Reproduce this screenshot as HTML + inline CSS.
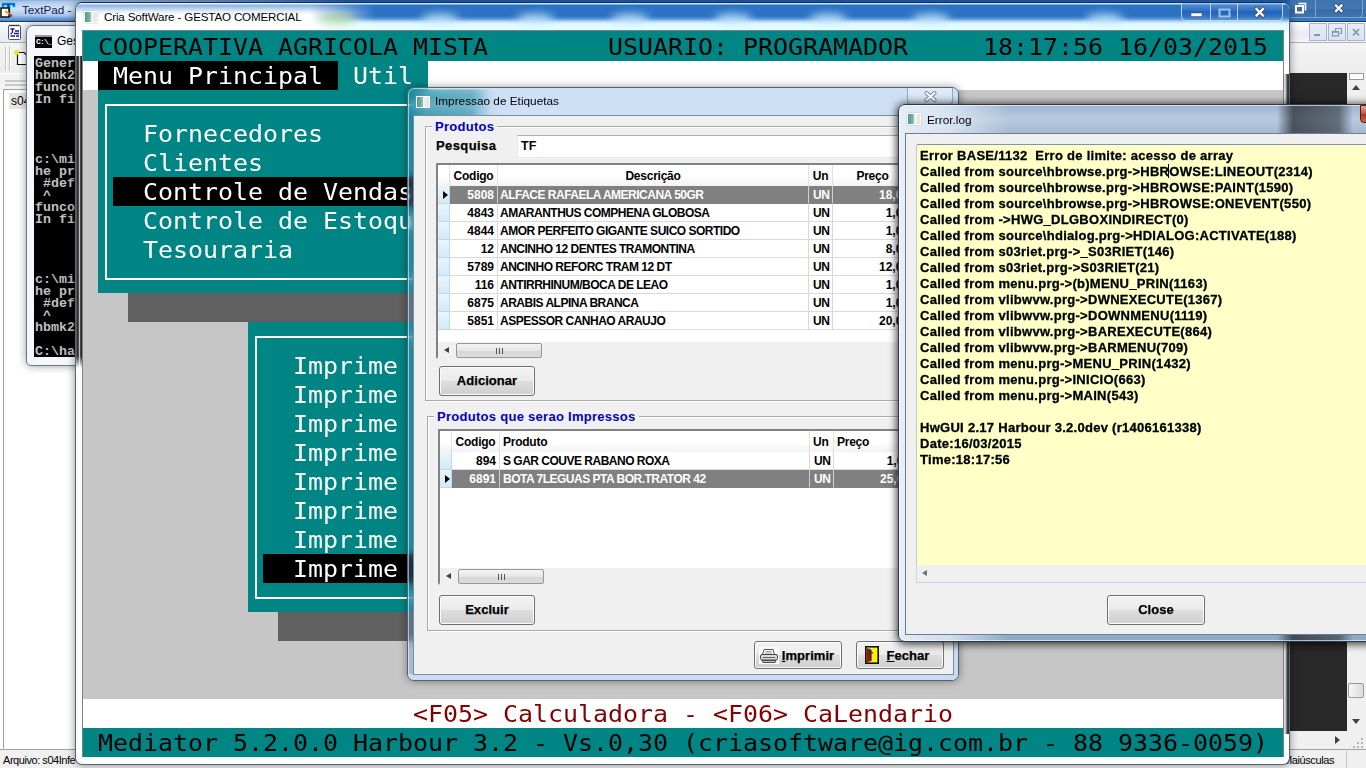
<!DOCTYPE html>
<html lang="pt-BR">
<head>
<meta charset="utf-8">
<title>Cria SoftWare - GESTAO COMERCIAL</title>
<style>
*{box-sizing:border-box;margin:0;padding:0}
html,body{width:1366px;height:768px;overflow:hidden;background:#fff}
body{position:relative;font-family:"Liberation Sans",sans-serif;font-size:12px;color:#000}
.abs{position:absolute}
/* ---------- TextPad (background app) ---------- */
#tp-title{left:0;top:0;width:1366px;height:22px;background:linear-gradient(#1f5fae 0,#2a6cc0 2px,#2b73c6 3px,#2a72c4 17px,#3c7fcb 21px,#23364f 21px);overflow:hidden}
#tp-title .glow{left:-30px;top:-4px;width:420px;height:25px;background:radial-gradient(ellipse at 20% 50%,rgba(225,235,250,.95),rgba(200,218,245,.8) 40%,rgba(160,190,235,0) 75%)}
#tp-title .t{left:22px;top:3px;font-size:11.7px;color:#0b1b5a;white-space:pre}
#tp-menu{left:0;top:22px;width:1366px;height:20px;background:linear-gradient(#f7f9fd,#e4eaf5)}
#tp-menu .m{left:30px;top:3px;white-space:pre}
#tp-tool{left:0;top:42px;width:1366px;height:31px;background:linear-gradient(#f4f4f4,#ededed);border-top:1px solid #b4b4b4}
.mdi{top:23px;width:18px;height:18px;border:1px solid #a9b5c6;background:linear-gradient(#e4eefa,#d6e4f4)}
.grip{top:3px;width:2px;height:25px;background:#c4c4c4;border-right:1px solid #fff}
#tp-left{left:3px;top:89px;width:77px;height:661px;background:#fff;border:1px solid #a0a0a0}
#tp-left .tab{left:5px;top:3px;width:60px;height:16px;background:#e6e6e6;padding:1px 2px;white-space:pre}
.ua{border:4px solid transparent;border-bottom:5px solid #404040;border-top:0}.da{border:4px solid transparent;border-top:5px solid #404040;border-bottom:0}.ra{border:4px solid transparent;border-left:5px solid #404040;border-right:0}
#tp-dark{left:1290px;top:73px;width:57px;height:658px;background:#282828}
#tp-vs{left:1347px;top:73px;width:19px;height:658px;background:#f0f0f0}
#tp-hs{left:1290px;top:731px;width:76px;height:18px;background:#f0f0f0}
#tp-status{left:0;top:749px;width:1366px;height:19px;background:#f0f0f0;border-top:1px solid #a0a0a0}
/* ---------- cmd window ---------- */
#cmd{left:26px;top:25px;width:120px;height:341px;background:#f4f8fd;border:1px solid #6a7686;border-radius:7px 7px 5px 5px;box-shadow:0 0 8px rgba(0,0,0,.4)}
#cmd .cico{left:8px;top:9px;width:17px;height:13px;background:#000;border-top:2px solid #999;overflow:hidden}
#cmd .cico i{position:absolute;left:1px;top:0;font:bold 8px/10px "Liberation Mono",monospace;color:#fff;letter-spacing:-.8px}
#cmd .ct{left:30px;top:8px;font-size:12px;white-space:pre}
#cmd .scr{left:7px;top:30px;width:120px;height:301px;background:#000;color:#c0c0c0;font:bold 13.3px/12px "Liberation Mono",monospace;white-space:pre;overflow:hidden;padding:2px 0 0 1px}
/* ---------- main window ---------- */
#main{left:75px;top:2px;width:1215px;height:763px;border-radius:7px;border:1px solid #5a6472;border-top-color:#10305e;box-shadow:0 0 9px rgba(0,0,0,.45);overflow:hidden;background:#fdfeff}
#main .tb{left:0;top:0;width:1213px;height:29px;background:linear-gradient(#cfe0f8 0,#cfe0f8 1px,#2a73c5 2px,#2a72c2 13px,#5b97d8 16px,#a9cdf0 18px,#d6f0fb 20px,#e2fbfd 22px,#e9ffff 28px)}
#main .tbl{left:0;top:0;width:300px;height:29px;background:linear-gradient(90deg,#fff 0,#fff 78%,rgba(255,255,255,0));-webkit-mask-image:linear-gradient(rgba(0,0,0,.45) 2px,rgba(0,0,0,.9) 9px,#000 12px);mask-image:linear-gradient(rgba(0,0,0,.45) 2px,rgba(0,0,0,.9) 9px,#000 12px)}
#main .cl{width:38px;height:10px;border-radius:50%;background:rgba(200,232,255,.9);filter:blur(4px);top:11px;margin-left:-8px}
#main .fl{left:0;top:53px;width:7px;height:312px;background:linear-gradient(90deg,#6a6a6a,#1a1a1a 30%,#b8c0c8 50%,#161616 70%,#4a4a4a);-webkit-mask-image:linear-gradient(#000 300px,transparent 312px);mask-image:linear-gradient(#000 300px,transparent 312px)}
#main .fr{left:1207px;top:71px;width:7px;height:660px;background:linear-gradient(90deg,#777,#e8e8e8 25%,#9aa0a8 45%,#3a3f46 60%,#2a2a2a)}
#main .ttl{left:28px;top:7px;font-size:11.6px;white-space:pre;letter-spacing:-.15px}
#main .cb{left:1105px;top:0;width:102px;height:18px;border:1px solid #c4d6ee;border-top:0;border-radius:0 0 5px 5px;background:linear-gradient(rgba(120,170,230,.55),rgba(50,110,190,.55) 45%,rgba(30,90,175,.6) 50%,rgba(70,130,205,.5))}
#main .cb i{position:absolute;top:0;width:1px;height:17px;background:#b8cde8}
#con{left:83px;top:32px;width:1200px;height:725px;background:#c6c6c6;font-family:"DejaVu Sans Mono","Liberation Mono",monospace;font-size:22.5px;line-height:30px;white-space:pre;clip-path:inset(-2px -1px -1px -1px);box-shadow:0 -1px 0 1px #7d8288}
#con .r{position:absolute;height:29px;white-space:pre}
#con .r i{display:inline-block;font-style:normal;transform:scaleX(1.1074);transform-origin:0 0}
#con .w{color:#fff}
.teal{background:#008585}
/* ---------- dialogs ---------- */
.dlg{background:#f0f0f0}
#d1{left:407px;top:87px;width:552px;height:594px;border-radius:7px;border:1px solid #55606e;background:linear-gradient(rgba(120,170,230,.22),rgba(85,150,225,.34) 28px,rgba(95,155,225,.3) 29px);-webkit-backdrop-filter:blur(4px);backdrop-filter:blur(4px);box-shadow:0 0 8px rgba(0,0,0,.4), inset 0 0 0 1px rgba(255,255,255,.55)}
#d1 .t1{left:0;top:0;width:550px;height:28px;border-radius:6px 6px 0 0;background:linear-gradient(90deg,rgba(205,224,246,0) 3px,rgba(205,224,246,.25) 18px,rgba(205,224,246,.38) 64px,rgba(205,224,246,.85) 82px,#cde0f6 94px)}
#d1 .t2{left:6px;top:28px;width:544px;height:564px;border-radius:0 0 6px 0;background:#c9dcf5}
#d1 .t3{left:0;top:586px;width:12px;height:6px;border-radius:0 0 0 6px;background:#c9dcf5}
#d1 .ttl,#d2 .ttl{left:27px;top:6px;font-size:11.8px;white-space:pre}
#d2 .ttl{top:7.5px;left:28px}
#d1c{left:413px;top:115px;width:541px;height:560px;border:1px solid #7f8b99}
#d1 .cbx{left:499px;top:0;width:46px;height:17px;border:1px solid #9aa8ba;border-top:0;border-radius:0 0 4px 4px;background:linear-gradient(#e3edf9,#cfdff3);text-align:center;line-height:15px}
.ico{width:14px;height:12px;border:1px solid #fff;background:linear-gradient(90deg,#4c9a8c 0,#7fb9a0 45%,#f4f4f4 50%,#e8e0e0 100%);box-shadow:0 0 1px #888}
.gb{border:1px solid #d5d5d5;box-shadow:inset 1px 1px 0 #fff, 1px 1px 0 #fff;border-color:#a9a9a9}
.gbl{background:#f0f0f0;color:#0000c0;font-weight:bold;font-size:13px;padding:0 3px;white-space:pre;letter-spacing:.28px}
.lbl{-webkit-text-stroke:.25px #000;font-weight:bold;font-size:13px;white-space:pre;letter-spacing:.4px}
.edit{background:#fff;border:1px solid #e3e9ef;border-top-color:#abadb3;font-size:12.5px;font-weight:bold;line-height:21px;padding-left:3px}
.grid{border:2px solid #828282;border-right-color:#e3e3e3;border-bottom-color:#e3e3e3;background:#fff}
.gh{background:linear-gradient(#fff,#fff 50%,#f2f2f2)}
.ghc{font-weight:bold;font-size:12px;line-height:22px;letter-spacing:-.25px;border-right:1px solid #e2e2e2;padding:0 3px;white-space:pre;overflow:hidden}
.gi{background:linear-gradient(#e9f5fb,#d3eaf6);border-right:1px solid #b9dcee;border-bottom:1px solid #b9dcee}
.gc{height:18px;font-weight:bold;font-size:12px;line-height:18px;border-right:1px solid #d9d9d9;border-bottom:1px solid #d9d9d9;white-space:pre;overflow:hidden;background:#fff}
.gc.up{letter-spacing:-.5px}
.gc.sel{background:#808080;color:#fff;border-color:#c0c0c0 #c0c0c0 #808080 #808080;border-right-color:#d0d0d0}
.tri{position:absolute;left:5px;top:5px;border:4px solid transparent;border-left:5px solid #000;border-right:0}
.hsb{height:17px;background:#f0f0f0}
.la{position:absolute;left:6px;top:5px;border:3.5px solid transparent;border-right:5px solid #404040;border-left:0}
.th{top:1px;height:15px;border:1px solid #979797;border-radius:2px;background:linear-gradient(#f4f4f4,#e6e6e6 50%,#d6d6d6 51%,#dcdcdc)}
.th i{position:absolute;left:50%;top:4px;margin-left:-3px;width:7px;height:6px;background:linear-gradient(90deg,#555 0,#555 1px,transparent 1px,transparent 3px,#555 3px,#555 4px,transparent 4px,transparent 6px,#555 6px)}
.btn{border:1px solid #707070;border-radius:3px;background:linear-gradient(#f2f2f2,#ebebeb 48%,#dddddd 52%,#cfcfcf);box-shadow:inset 0 0 0 1px #fcfcfc;text-align:center;font-weight:bold;font-size:13px;white-space:pre}
.btn span{-webkit-text-stroke:.25px #000;display:block;line-height:28px;letter-spacing:.05px}
#d2{left:898px;top:104px;width:480px;height:538px;border-radius:7px;border:1px solid #2f3946;background:linear-gradient(90deg,rgba(232,240,250,.95) 0,rgba(225,235,248,.8) 50px,rgba(225,235,248,0) 110px,rgba(0,0,0,0) 378px,rgba(30,34,40,.7) 394px,rgba(50,56,64,.62) 440px,rgba(0,0,0,0) 454px),linear-gradient(#9fb5cf,#b7cadf 14px,#a5b9d2 28px,#b9d1ea 29px,#b9d1ea 525px,#8faac9 530px);box-shadow:0 1px 9px 1px rgba(0,0,0,.8), inset 0 0 0 1px rgba(255,255,255,.6)}
#d2c{left:905px;top:133px;width:470px;height:502px;border:1px solid #6e7c8c}
#log{-webkit-text-stroke:.3px #000;left:917px;top:145px;width:460px;height:420px;background:#ffffc8;font-weight:bold;font-size:13px;line-height:16px;letter-spacing:.28px;white-space:pre;padding:3px 0 0 3px;overflow:hidden;box-shadow:0 -1px 0 #7d95b2,-1px 0 0 #b9c8d8}
#d2 .cbr{left:461px;top:0;width:30px;height:18px;border-radius:0 0 0 4px;background:linear-gradient(#e7a395,#c9503c 50%,#b72d17 51%,#d0664f);border:1px solid #5c1a10}

.b{font-weight:bold}
</style>
</head>
<body>
<!-- TextPad -->
<div id="tp-title" class="abs"><div class="abs glow"></div>
<svg class="abs" style="left:0;top:2px" width="17" height="17" viewBox="0 0 17 17"><path d="M2 1h13v4h-2V3h-3v10h2v2H5v-2h2V3H4v2H2z" fill="#1a3fb0" stroke="#00d0f0" stroke-width=".8"/><rect x="1" y="6" width="8" height="9" fill="#fff" stroke="#000" stroke-width="1.4"/><path d="M5 9l6 4" stroke="#f0a000" stroke-width="2"/><path d="M9 12l3 2" stroke="#e02020" stroke-width="2"/></svg>
<span class="abs t">TextPad - </span></div>
<div id="tp-menu" class="abs">
<svg class="abs" style="left:8px;top:1px" width="13" height="17" viewBox="0 0 13 17"><rect x=".5" y="2.5" width="12" height="14" rx="1" fill="#fff" stroke="#555"/><path d="M1 2.5h11" stroke="#222" stroke-width="1.6" stroke-dasharray="1.2 1"/><path d="M2.5 6h4M4.5 6v4M7 8h4M2.5 10.500h1.500M6 10.500h5M2.500 13h4.500M8 13h3" stroke="#1a1a90" stroke-width="1.3"/></svg>
</div>
<div id="tp-tool" class="abs"><i class="abs grip" style="left:5px"></i><i class="abs grip" style="left:9px"></i>
<svg class="abs" style="left:14px;top:7px" width="13" height="16" viewBox="0 0 13 16"><path d="M3.500 2.500h6.500l2.500 2.500v9.500h-9z" fill="#fff" stroke="#111" stroke-width="1.2"/><path d="M2.500 0v5M0 2.500h5M.8.800l3.400 3.400M4.200.8L.8 4.200" stroke="#f6e600" stroke-width="1.300"/></svg></div>
<div class="abs" style="left:0;top:74px;width:80px;height:16px;background:#f3f3f3"></div>
<div class="abs" style="left:5px;top:80px;width:70px;height:2px;background:#c9c9c9"></div>
<div class="abs" style="left:5px;top:84px;width:70px;height:2px;background:#c9c9c9"></div>
<div id="tp-left" class="abs"><div class="abs tab">s04Infe</div></div>
<div class="abs" style="left:1290px;top:0;width:76px;height:18px;background:linear-gradient(#3f74ad,#4279b3 50%,#3a6da6 55%,#3f74ad);border-bottom:1px solid #7fa3cc"></div>
<div class="abs" style="left:1315px;top:0;width:48px;height:18px;border:1px solid #7fa3cc;border-top:0;border-radius:0 0 5px 0"></div>
<svg class="abs" style="left:1290px;top:0" width="76" height="18" viewBox="0 0 76 18"><path d="M8.500 3.500h7v7" fill="none" stroke="#fff" stroke-width="1.600"/><rect x="6" y="6" width="7" height="6.500" fill="#3c6da2" stroke="#fff" stroke-width="2"/><path d="M46 5.500l5.500 5.500M51.500 5.500l-5.500 5.500" stroke="#2a4a78" stroke-width="3.800" stroke-linecap="square"/><path d="M46 5.500l5.500 5.500M51.500 5.500l-5.500 5.500" stroke="#fff" stroke-width="2.300" stroke-linecap="square"/></svg>
<div class="abs" style="left:1290px;top:22px;width:76px;height:20px;background:linear-gradient(#fff,#eceaf4 60%,#f4f4f8)"></div>
<div class="abs mdi" style="left:1309px"><svg width="16" height="16"><path d="M4 11h6" stroke="#8a96a8" stroke-width="2"/></svg></div>
<div class="abs mdi" style="left:1328px"><svg width="16" height="16"><path d="M6.500 7v-2.500h6v5h-2" fill="none" stroke="#8a96a8" stroke-width="1.200"/><rect x="3.500" y="7.500" width="6" height="4.500" fill="none" stroke="#8a96a8" stroke-width="1.200"/><path d="M3.500 8h6" stroke="#8a96a8" stroke-width="1.600"/></svg></div>
<div class="abs mdi" style="left:1347px"><svg width="16" height="16"><path d="M5 5l6 6.500M11 5l-6 6.500" stroke="#8a96a8" stroke-width="1.800"/></svg></div>
<div id="tp-dark" class="abs"></div>
<div id="tp-vs" class="abs"><div class="abs" style="left:2px;top:0;width:15px;height:7px;border:1px solid #9a9a9a;background:#fff"></div><b class="abs ua" style="left:5px;top:12px"></b><div class="abs" style="left:1px;top:610px;width:16px;height:15px;border:1px solid #9a9a9a;border-radius:2px;background:linear-gradient(90deg,#f6f6f6,#dcdcdc)"></div><b class="abs da" style="left:5px;top:646px"></b></div>
<div id="tp-hs" class="abs"><b class="abs ra" style="left:45px;top:5px"></b><div class="abs" style="left:57px;top:0;width:19px;height:18px;background:#f0f0f0"><svg class="abs" style="left:6px;top:6px" width="11" height="11"><path d="M8 1h2v2h-2zM8 5h2v2h-2zM8 9h2v2h-2zM4 5h2v2h-2zM4 9h2v2h-2zM0 9h2v2h-2z" fill="#b8b8b8"/></svg></div></div>
<div id="tp-status" class="abs"><span class="abs" style="left:3px;top:4px;white-space:pre;font-size:11px;letter-spacing:-.45px">Arquivo: s04Infe</span><span class="abs" style="left:1283px;top:4px;white-space:pre;font-size:11px;letter-spacing:-.4px">Maiúsculas</span><i class="abs" style="left:1346px;top:1px;width:1px;height:17px;background:#c4c4c4"></i></div>
<!-- cmd -->
<div id="cmd" class="abs"><div class="abs cico"><i>C:\_</i></div><span class="abs ct">Gestao</span><div class="abs scr">Gener
hbmk2
funco
In fi




c:\mi
he pr
 #def
 ^
funco
In fi




c:\mi
he pr
 #def
 ^
hbmk2

C:\ha</div></div>
<!-- main window -->
<div id="main" class="abs"><div class="abs tb"></div><div class="abs tbl"></div>
<i class="abs cl" style="left:250px;background:rgba(170,215,150,.8)"></i><i class="abs cl" style="left:353px"></i><i class="abs cl" style="left:448px"></i><i class="abs cl" style="left:543px"></i><i class="abs cl" style="left:646px"></i><i class="abs cl" style="left:741px"></i><i class="abs cl" style="left:844px"></i><i class="abs cl" style="left:1018px"></i>
<div class="abs fl"></div><div class="abs fr"></div>
<div class="abs ico" style="left:8px;top:8px"></div><div class="abs ttl">Cria SoftWare - GESTAO COMERCIAL</div>
<div class="abs cb"><i style="left:28px"></i><i style="left:55px"></i>
<svg class="abs" style="left:0;top:0" width="102" height="18" viewBox="0 0 102 18"><rect x="9" y="10" width="11" height="3.500" fill="#fff" stroke="#4a5a70" stroke-width=".6"/><rect x="37.500" y="6.500" width="10" height="7" fill="none" stroke="#9fc0ea" stroke-width="2"/><path d="M74.500 6l6.500 6.500M81 6l-6.500 6.500" stroke="#3a4860" stroke-width="3.800" stroke-linecap="square"/><path d="M74.500 6l6.500 6.500M81 6l-6.500 6.500" stroke="#fff" stroke-width="2.300" stroke-linecap="square"/></svg></div></div>
<div id="con" class="abs">
<div class="r teal" style="left:0;top:-1px;width:1200px;height:30px"></div>
<div class="r" style="left:15px;top:0"><i>COOPERATIVA AGRICOLA MISTA</i></div>
<div class="r" style="left:525px;top:0"><i>USUARIO: PROGRAMADOR</i></div>
<div class="r" style="left:900px;top:0"><i>18:17:56 16/03/2015</i></div>
<div class="r" style="left:0;top:29px;width:1200px;background:#fff"></div>
<div class="r" style="left:15px;top:29px;width:240px;background:#000;color:#fff"><i> Menu Principal </i></div>
<div class="r teal" style="left:255px;top:29px;width:90px;color:#fff"><i> Util </i></div>
<!-- menu 1 -->
<div class="r teal" style="left:15px;top:58px;width:390px;height:203px"></div>
<div class="r" style="left:22px;top:72px;width:376px;height:176px;border:2px solid #fff"></div>
<div class="r" style="left:30px;top:145px;width:360px;background:#000"></div>
<div class="r w" style="left:60px;top:87px"><i>Fornecedores</i></div>
<div class="r w" style="left:60px;top:116px"><i>Clientes</i></div>
<div class="r w" style="left:60px;top:145px"><i>Controle de Vendas</i></div>
<div class="r w" style="left:60px;top:174px"><i>Controle de Estoque</i></div>
<div class="r w" style="left:60px;top:203px"><i>Tesouraria</i></div>
<div class="r" style="left:45px;top:261px;width:390px;background:#606060"></div><div class="r" style="left:405px;top:87px;width:30px;height:174px;background:#606060"></div>
<!-- menu 2 -->
<div class="r teal" style="left:165px;top:290px;width:500px;height:290px"></div>
<div class="r" style="left:172px;top:304px;width:500px;height:263px;border:2px solid #fff"></div>
<div class="r" style="left:180px;top:522px;width:500px;background:#000"></div>
<div class="r w" style="left:210px;top:319px"><i>Imprime</i></div>
<div class="r w" style="left:210px;top:348px"><i>Imprime</i></div>
<div class="r w" style="left:210px;top:377px"><i>Imprime</i></div>
<div class="r w" style="left:210px;top:406px"><i>Imprime</i></div>
<div class="r w" style="left:210px;top:435px"><i>Imprime</i></div>
<div class="r w" style="left:210px;top:464px"><i>Imprime</i></div>
<div class="r w" style="left:210px;top:493px"><i>Imprime</i></div>
<div class="r w" style="left:210px;top:522px"><i>Imprime</i></div>
<div class="r" style="left:195px;top:580px;width:500px;background:#606060"></div>
<!-- bottom rows -->
<div class="r" style="left:0;top:667px;width:1200px;background:#fff"></div>
<div class="r" style="left:330px;top:667px;color:#850000"><i>&lt;F05&gt; Calculadora - &lt;F06&gt; CaLendario</i></div>
<div class="r teal" style="left:0;top:696px;width:1200px"></div>
<div class="r" style="left:15px;top:696px"><i>Mediator 5.2.0.0 Harbour 3.2 - Vs.0,30 (criasoftware@ig.com.br - 88 9336-0059)</i></div>
</div>
<!-- dialog: Impressao de Etiquetas -->
<div id="d1" class="abs"><div class="abs t1"></div><div class="abs t2"></div><div class="abs t3"></div><div class="abs ico" style="left:8px;top:8px"></div><div class="abs ttl">Impressao de Etiquetas</div><div class="abs cbx"><svg width="13" height="11" viewBox="0 0 13 11" style="margin-top:3px"><path d="M2.500 2l8 7M10.500 2l-8 7" stroke="#78859a" stroke-width="4" stroke-linecap="round" fill="none"/><path d="M2.500 2l8 7M10.500 2l-8 7" stroke="#fff" stroke-width="2.200" stroke-linecap="round" fill="none"/></svg></div></div>
<div id="d1c" class="abs dlg"></div>
<div class="abs gb" style="left:425px;top:126px;width:520px;height:275px"></div>
<div class="abs gbl" style="left:432px;top:119px">Produtos</div>
<div class="abs lbl" style="left:436px;top:138px">Pesquisa</div>
<div class="abs edit" style="left:517px;top:135px;width:420px;height:23px">TF</div>
<div class="abs grid" style="left:436px;top:163px;width:505px;height:196px"></div>
<div class="abs gh" style="left:438px;top:165px;width:503px;height:21px"></div>
<div class="abs ghc" style="left:438px;top:165px;width:12px;height:21px;text-align:left"></div>
<div class="abs ghc" style="left:450px;top:165px;width:48px;height:21px;text-align:center">Codigo</div>
<div class="abs ghc" style="left:498px;top:165px;width:311px;height:21px;text-align:center">Descrição</div>
<div class="abs ghc" style="left:809px;top:165px;width:24px;height:21px;text-align:center">Un</div>
<div class="abs ghc" style="left:833px;top:165px;width:80px;height:21px;text-align:center">Preço</div>
<div class="abs gi" style="left:438px;top:186px;width:12px;height:18px"><b class="tri"></b></div>
<div class="abs gc sel" style="left:450px;top:186px;width:48px;text-align:right;padding-right:3px">5808</div>
<div class="abs gc sel up" style="left:498px;top:186px;width:311px;padding-left:2px">ALFACE RAFAELA AMERICANA 50GR</div>
<div class="abs gc sel up" style="left:809px;top:186px;width:24px;padding-left:4px">UN</div>
<div class="abs gc sel" style="left:833px;top:186px;width:80px;text-align:right;padding-right:3px">18,00</div>
<div class="abs gi" style="left:438px;top:204px;width:12px;height:18px"></div>
<div class="abs gc" style="left:450px;top:204px;width:48px;text-align:right;padding-right:3px">4843</div>
<div class="abs gc up" style="left:498px;top:204px;width:311px;padding-left:2px">AMARANTHUS COMPHENA GLOBOSA</div>
<div class="abs gc up" style="left:809px;top:204px;width:24px;padding-left:4px">UN</div>
<div class="abs gc" style="left:833px;top:204px;width:80px;text-align:right;padding-right:3px">1,00</div>
<div class="abs gi" style="left:438px;top:222px;width:12px;height:18px"></div>
<div class="abs gc" style="left:450px;top:222px;width:48px;text-align:right;padding-right:3px">4844</div>
<div class="abs gc up" style="left:498px;top:222px;width:311px;padding-left:2px">AMOR PERFEITO GIGANTE SUICO SORTIDO</div>
<div class="abs gc up" style="left:809px;top:222px;width:24px;padding-left:4px">UN</div>
<div class="abs gc" style="left:833px;top:222px;width:80px;text-align:right;padding-right:3px">1,00</div>
<div class="abs gi" style="left:438px;top:240px;width:12px;height:18px"></div>
<div class="abs gc" style="left:450px;top:240px;width:48px;text-align:right;padding-right:3px">12</div>
<div class="abs gc up" style="left:498px;top:240px;width:311px;padding-left:2px">ANCINHO 12 DENTES TRAMONTINA</div>
<div class="abs gc up" style="left:809px;top:240px;width:24px;padding-left:4px">UN</div>
<div class="abs gc" style="left:833px;top:240px;width:80px;text-align:right;padding-right:3px">8,00</div>
<div class="abs gi" style="left:438px;top:258px;width:12px;height:18px"></div>
<div class="abs gc" style="left:450px;top:258px;width:48px;text-align:right;padding-right:3px">5789</div>
<div class="abs gc up" style="left:498px;top:258px;width:311px;padding-left:2px">ANCINHO REFORC TRAM 12 DT</div>
<div class="abs gc up" style="left:809px;top:258px;width:24px;padding-left:4px">UN</div>
<div class="abs gc" style="left:833px;top:258px;width:80px;text-align:right;padding-right:3px">12,00</div>
<div class="abs gi" style="left:438px;top:276px;width:12px;height:18px"></div>
<div class="abs gc" style="left:450px;top:276px;width:48px;text-align:right;padding-right:3px">116</div>
<div class="abs gc up" style="left:498px;top:276px;width:311px;padding-left:2px">ANTIRRHINUM/BOCA DE LEAO</div>
<div class="abs gc up" style="left:809px;top:276px;width:24px;padding-left:4px">UN</div>
<div class="abs gc" style="left:833px;top:276px;width:80px;text-align:right;padding-right:3px">1,00</div>
<div class="abs gi" style="left:438px;top:294px;width:12px;height:18px"></div>
<div class="abs gc" style="left:450px;top:294px;width:48px;text-align:right;padding-right:3px">6875</div>
<div class="abs gc up" style="left:498px;top:294px;width:311px;padding-left:2px">ARABIS ALPINA BRANCA</div>
<div class="abs gc up" style="left:809px;top:294px;width:24px;padding-left:4px">UN</div>
<div class="abs gc" style="left:833px;top:294px;width:80px;text-align:right;padding-right:3px">1,00</div>
<div class="abs gi" style="left:438px;top:312px;width:12px;height:18px"></div>
<div class="abs gc" style="left:450px;top:312px;width:48px;text-align:right;padding-right:3px">5851</div>
<div class="abs gc up" style="left:498px;top:312px;width:311px;padding-left:2px">ASPESSOR CANHAO ARAUJO</div>
<div class="abs gc up" style="left:809px;top:312px;width:24px;padding-left:4px">UN</div>
<div class="abs gc" style="left:833px;top:312px;width:80px;text-align:right;padding-right:3px">20,00</div>
<div class="abs hsb" style="left:438px;top:342px;width:501px"><b class="la"></b><div class="abs th" style="left:18px;width:86px"><i></i></div></div>
<div class="abs btn" style="left:439px;top:366px;width:96px;height:30px"><span>Adicionar</span></div>
<div class="abs gb" style="left:427px;top:416px;width:518px;height:215px"></div>
<div class="abs gbl" style="left:434px;top:409px">Produtos que serao Impressos</div>
<div class="abs grid" style="left:438px;top:429px;width:503px;height:156px"></div>
<div class="abs gh" style="left:440px;top:431px;width:501px;height:21px"></div>
<div class="abs ghc" style="left:440px;top:431px;width:12px;height:21px;text-align:left"></div>
<div class="abs ghc" style="left:452px;top:431px;width:48px;height:21px;text-align:center">Codigo</div>
<div class="abs ghc" style="left:500px;top:431px;width:310px;height:21px;text-align:left">Produto</div>
<div class="abs ghc" style="left:810px;top:431px;width:24px;height:21px;text-align:left">Un</div>
<div class="abs ghc" style="left:834px;top:431px;width:80px;height:21px;text-align:left">Preço</div>
<div class="abs gi" style="left:440px;top:452px;width:12px;height:18px"></div>
<div class="abs gc" style="left:452px;top:452px;width:48px;text-align:right;padding-right:3px">894</div>
<div class="abs gc up" style="left:500px;top:452px;width:310px;padding-left:3px">S GAR COUVE RABANO ROXA</div>
<div class="abs gc up" style="left:810px;top:452px;width:24px;padding-left:4px">UN</div>
<div class="abs gc" style="left:834px;top:452px;width:80px;text-align:right;padding-right:3px">1,00</div>
<div class="abs gi" style="left:440px;top:470px;width:12px;height:18px"><b class="tri"></b></div>
<div class="abs gc sel" style="left:452px;top:470px;width:48px;text-align:right;padding-right:3px">6891</div>
<div class="abs gc sel up" style="left:500px;top:470px;width:310px;padding-left:3px">BOTA 7LEGUAS PTA BOR.TRATOR 42</div>
<div class="abs gc sel up" style="left:810px;top:470px;width:24px;padding-left:4px">UN</div>
<div class="abs gc sel" style="left:834px;top:470px;width:80px;text-align:right;padding-right:3px">25,00</div>
<div class="abs hsb" style="left:440px;top:568px;width:499px"><b class="la"></b><div class="abs th" style="left:18px;width:86px"><i></i></div></div>
<div class="abs btn" style="left:439px;top:595px;width:96px;height:30px"><span>Excluir</span></div>
<div class="abs btn" style="left:754px;top:641px;width:88px;height:28px"><svg class="abs" style="left:4px;top:5px" width="20" height="17" viewBox="0 0 20 17"><rect x="0" y="0" width="20" height="17" fill="#fafafa"/><path d="M5 2.500h9l1.500 5h-12z" fill="#fff" stroke="#555" stroke-width="1"/><path d="M6.500 4.500h6M6 6h7" stroke="#888" stroke-width=".8"/><rect x="1.500" y="7.500" width="17" height="5.500" rx="1.500" fill="#d8d8d8" stroke="#444" stroke-width="1"/><path d="M3 13.500h14l-1 2h-12z" fill="#bbb" stroke="#444" stroke-width=".9"/><path d="M4 10.500h12" stroke="#666" stroke-width="1"/></svg><span style="padding-left:20px"><u>I</u>mprimir</span></div>
<div class="abs btn" style="left:856px;top:641px;width:88px;height:28px"><svg class="abs" style="left:8px;top:4px" width="14" height="18" viewBox="0 0 14 18"><rect x=".8" y=".8" width="12.400" height="16.400" fill="#fff200" stroke="#111" stroke-width="1.600"/><path d="M1.600 1.600l4.400 1.800v11.600l-4.400 1.400z" fill="#8a1a10"/><path d="M6 4v11" stroke="#111" stroke-width="1"/><rect x="2.500" y="1.500" width="2.500" height="1.500" fill="#30c8d8"/><rect x="6.500" y="6" width="1.200" height="1.600" fill="#111"/></svg><span style="padding-left:16px"><u>F</u>echar</span></div>
<!-- dialog: Error.log -->
<div id="d2" class="abs"><div class="abs ico" style="left:8px;top:8px"></div><div class="abs ttl">Error.log</div><div class="abs cbr"></div></div>
<div id="d2c" class="abs dlg"></div>
<div id="log" class="abs">Error BASE/1132  Erro de limite: acesso de array
Called from source\hbrowse.prg-&gt;HBROWSE:LINEOUT(2314)
Called from source\hbrowse.prg-&gt;HBROWSE:PAINT(1590)
Called from source\hbrowse.prg-&gt;HBROWSE:ONEVENT(550)
Called from -&gt;HWG_DLGBOXINDIRECT(0)
Called from source\hdialog.prg-&gt;HDIALOG:ACTIVATE(188)
Called from s03riet.prg-&gt;_S03RIET(146)
Called from s03riet.prg-&gt;S03RIET(21)
Called from menu.prg-&gt;(b)MENU_PRIN(1163)
Called from vlibwvw.prg-&gt;DWNEXECUTE(1367)
Called from vlibwvw.prg-&gt;DOWNMENU(1119)
Called from vlibwvw.prg-&gt;BAREXECUTE(864)
Called from vlibwvw.prg-&gt;BARMENU(709)
Called from menu.prg-&gt;MENU_PRIN(1432)
Called from menu.prg-&gt;INICIO(663)
Called from menu.prg-&gt;MAIN(543)

HwGUI 2.17 Harbour 3.2.0dev (r1406161338)
Date:16/03/2015
Time:18:17:56</div>
<div class="abs" style="left:916px;top:565px;width:461px;height:18px;background:#f0f0f0;border-bottom:1px solid #b9d3e8;border-left:1px solid #c5dbec"><b class="la" style="top:5px;left:5px;border-right-color:#707070"></b></div>
<div class="abs" style="left:1168px;top:164px;width:1px;height:14px;background:#000"></div>
<div class="abs btn" style="left:1107px;top:595px;width:98px;height:30px"><span>Close</span></div>
</body>
</html>
